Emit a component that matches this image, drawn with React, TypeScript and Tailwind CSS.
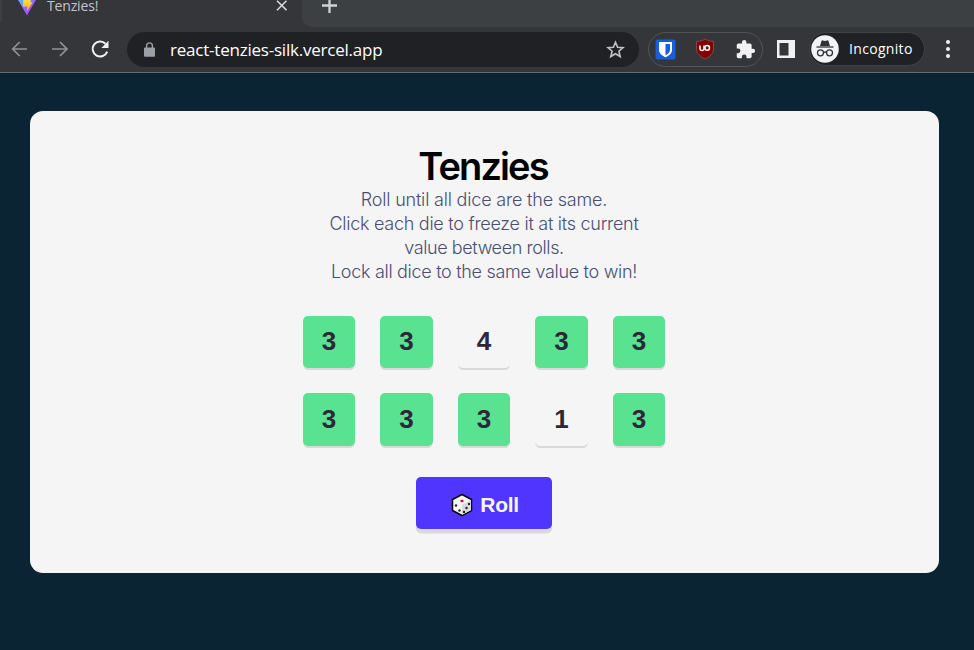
const dice = [
  { value: 3, held: true },
  { value: 3, held: true },
  { value: 4, held: false },
  { value: 3, held: true },
  { value: 3, held: true },
  { value: 3, held: true },
  { value: 3, held: true },
  { value: 3, held: true },
  { value: 1, held: false },
  { value: 3, held: true },
];

function ViteLogo() {
  return (
    <svg width="20" height="18" viewBox="0 0 20 18" className="block">
      <defs>
        <linearGradient id="vite" x1="0" y1="0" x2="1" y2="1">
          <stop offset="0" stopColor="#41d1ff" />
          <stop offset="0.65" stopColor="#a74dff" />
          <stop offset="1" stopColor="#bd34fe" />
        </linearGradient>
        <linearGradient id="bolt" x1="0" y1="0" x2="0" y2="1">
          <stop offset="0" stopColor="#ffe45c" />
          <stop offset="1" stopColor="#ffa800" />
        </linearGradient>
      </defs>
      <path d="M0 0h20L10 17.5z" fill="url(#vite)" />
      <path d="M6.500 0h8l-1.200 4.200h2.300L9.6 14l.9-5.400H5.800z" fill="url(#bolt)" />
    </svg>
  );
}

function TabStrip() {
  return (
    <header className="flex h-[27px] bg-[#35363a]">
      <div className="h-[22px] w-[2px] rounded-br-[2px] bg-[#3c4043]" />
      <div className="flex w-[300px] items-start pl-[15px]">
        <div className="-mt-[2px]">
          <ViteLogo />
        </div>
        <span className="-mt-[4px] ml-[10px] w-[228px] text-[14px] leading-[19px] tracking-[-0.150px] text-[#c3c4c6]">
          Tenzies!
        </span>
        <svg width="12" height="12" viewBox="0 0 12 12" className="block" stroke="#d6d7d9" strokeWidth="1.6">
          <path d="M2 .7l9.500 9.500M11.500 .7L2 10.200" />
        </svg>
      </div>
      <div className="flex-1 rounded-bl-[10px] bg-[#3c4043] pl-[19px]">
        <svg width="17" height="14" viewBox="0 0 17 14" className="block" stroke="#d0d1d3" strokeWidth="2.300">
          <path d="M1 5.500h15M8.500 -2v15" />
        </svg>
      </div>
    </header>
  );
}

function Toolbar() {
  return (
    <nav className="flex h-[46px] items-center border-b border-[#6a6b6e] bg-[#35363a] pb-px pl-[11px]">
      <svg width="18" height="18" viewBox="0 0 18 18" fill="none" stroke="#919295" strokeWidth="1.7">
        <path d="M16 9H2M8.700 2L1.700 9l7 7" />
      </svg>
      <svg width="18" height="18" viewBox="0 0 18 18" fill="none" stroke="#919295" strokeWidth="1.7" className="ml-[22px]">
        <path d="M1 9h14.500M9 2l7 7-7 7" />
      </svg>
      <svg width="20" height="20" viewBox="0 0 20 20" className="ml-[21px]">
        <path d="M15.500 4.700A7.500 7.500 0 1 0 17.200 12.600" fill="none" stroke="#f1f1f1" strokeWidth="2" />
        <path d="M18.500 1.800v7.100h-7.100z" fill="#f1f1f1" />
      </svg>
      <div className="mt-px ml-[17px] flex h-[35px] w-[512px] items-center rounded-full bg-[#202124] pr-[14px] pl-[17px]">
        <svg width="11" height="16" viewBox="0 0 11 16">
          <rect x="0" y="5.500" width="11" height="9.300" rx="1" fill="#9aa0a6" />
          <path d="M2.600 6V3.800a2.900 2.900 0 0 1 5.800 0V6" fill="none" stroke="#9aa0a6" strokeWidth="1.400" />
        </svg>
        <span className="ml-[15px] flex-1 text-[17px] leading-[22px] tracking-[-0.220px] whitespace-nowrap text-white">
          react-tenzies-silk.vercel.app
        </span>
        <svg width="19" height="19" viewBox="0 0 19 19" fill="none" stroke="#c2c3c5" strokeWidth="1.600" className="-mt-px">
          <path d="M9.500 2.200l2.100 5 5.400.5-4.100 3.500 1.300 5.300-4.700-2.800-4.700 2.800 1.300-5.300L2 7.700l5.400-.5z" />
        </svg>
      </div>
      <div className="mt-px ml-[9px] flex h-[35px] w-[115px] items-center rounded-full border border-[#525357] pb-px pl-[6px]">
        <svg width="21" height="21" viewBox="0 0 21 21">
          <rect x="0.500" y="0.500" width="20" height="20" rx="2" fill="#175ddc" />
          <path d="M4 3h13v8c0 3.500-3.500 6-6.500 7.300C7.500 17 4 14.500 4 11z" fill="#fff" />
          <path d="M10.500 5h4.500v6c0 2.300-2 4-4.500 5.200z" fill="#175ddc" />
        </svg>
        <svg width="20" height="22" viewBox="0 0 20 22" className="ml-[19px]">
          <path d="M10 1c2.500 1.700 5 2.400 8.500 2.400v7.600c0 4.500-4 7.800-8.500 10-4.500-2.200-8.500-5.500-8.500-10V3.400C5 3.400 7.500 2.700 10 1z" fill="#800000" stroke="#a05558" strokeWidth="0.700" />
          <path d="M5 7.500v3.100a2 2 0 0 0 4 0V7.500" fill="none" stroke="#fff" strokeWidth="1.500" />
          <circle cx="12.200" cy="9.900" r="2.300" fill="none" stroke="#fff" strokeWidth="1.500" />
        </svg>
        <svg width="21" height="21" viewBox="0 0 24 24" className="ml-[20px]" fill="#f1f1f1">
          <path d="M20.500 11H19V7c0-1.100-.9-2-2-2h-4V3.500a2.500 2.500 0 0 0-5 0V5H4c-1.100 0-2 .9-2 2v3.800h1.500a2.700 2.700 0 0 1 0 5.400H2V20c0 1.100.9 2 2 2h3.800v-1.500a2.700 2.700 0 0 1 5.400 0V22H17c1.100 0 2-.9 2-2v-4h1.500a2.500 2.500 0 0 0 0-5z" />
        </svg>
      </div>
      <svg width="18" height="18" viewBox="0 0 18 18" className="ml-[14px]">
        <path d="M0 0h18v18H0z" fill="#f1f1f1" />
        <path d="M2.500 3h9v12.500h-9z" fill="#35363a" />
      </svg>
      <div className="ml-[14px] flex h-[34px] w-[116px] items-center rounded-full border border-[#414246] bg-[#202124] pl-px">
        <svg width="28" height="28" viewBox="0 0 28 28">
          <circle cx="14" cy="14" r="13.800" fill="#f1f3f4" />
          <path d="M9 11l1.500-5c.2-.7.8-.8 1.300-.6l2.200.6 2.200-.6c.5-.2 1.100-.1 1.300.6l1.500 5z" fill="#303135" />
          <path d="M5.500 12h17" stroke="#303135" strokeWidth="1.300" />
          <g fill="none" stroke="#303135" strokeWidth="1.300">
            <circle cx="9.500" cy="17.800" r="3" />
            <circle cx="18.500" cy="17.800" r="3" />
            <path d="M12.500 17.500q1.500-1 3 0" />
          </g>
        </svg>
        <span className="ml-[10px] text-[14px] leading-[20px] tracking-[0.320px] text-white">Incognito</span>
      </div>
      <div className="ml-[21px] flex flex-col gap-[3px]">
        <i className="size-1 rounded-full bg-[#f1f1f1]" />
        <i className="size-1 rounded-full bg-[#f1f1f1]" />
        <i className="size-1 rounded-full bg-[#f1f1f1]" />
      </div>
    </nav>
  );
}

function Die({ value, held }: { value: number; held: boolean }) {
  return (
    <button
      className={`flex h-[52.500px] w-[52.500px] items-center justify-center rounded-[5px] pb-[2px] font-['Liberation_Sans',Arial,sans-serif] text-[26px] leading-none font-bold text-[#2b283a] shadow-[0_2.500px_0_-0.500px_#d9d9d9] ${
        held ? "bg-[#59e391]" : "bg-[#f5f5f5]"
      }`}
    >
      {value}
    </button>
  );
}

function DiceIcon() {
  return (
    <svg width="22" height="24" viewBox="0 0 22 24">
      <path d="M11 1.500l9.500 5v11L11 22.500l-9.500-5v-11z" fill="#f5f5f5" stroke="#080808" strokeWidth="1.500" strokeLinejoin="round" />
      <path d="M11 12l9-5v10.300l-9 4.700z" fill="#dadada" />
      <ellipse cx="11" cy="8" rx="1.700" ry="1.200" fill="#d31324" />
      <g fill="#242424">
        <circle cx="5" cy="12.500" r="1.200" />
        <circle cx="8.500" cy="17.500" r="1.200" />
        <circle cx="13" cy="19" r="1.200" />
        <circle cx="15.500" cy="15" r="1.200" />
        <circle cx="18" cy="11" r="1.200" />
      </g>
    </svg>
  );
}

export default function App() {
  return (
    <div className="h-[650px] w-[974px] overflow-hidden bg-[#0b2434] font-['Open_Sans','Noto_Sans',sans-serif]">
      <TabStrip />
      <Toolbar />
      <main className="mt-[38px] ml-[30px] flex h-[462px] w-[909px] flex-col items-center rounded-[13px] bg-[#f5f5f5] pt-[32px] pr-px font-['Inter',sans-serif]">
        <h1 className="h-[45px] pr-[2px] text-[38px] leading-[47px] font-[560] tracking-[-1.900px] text-black">Tenzies</h1>
        <div className="flex flex-col items-center text-[18px] leading-[24px] font-light whitespace-nowrap text-[#4a4e74]">
          <p className="tracking-[-0.190px]">Roll until all dice are the same.</p>
          <p className="tracking-[-0.270px]">Click each die to freeze it at its current</p>
          <p className="tracking-[-0.400px]">value between rolls.</p>
          <p className="tracking-[-0.300px]">Lock all dice to the same value to win!</p>
        </div>
        <div className="mt-[31.750px] grid grid-cols-5 gap-[25px]">
          {dice.map((die, i) => (
            <Die key={i} value={die.value} held={die.held} />
          ))}
        </div>
        <button className="mt-[31.250px] flex h-[52px] w-[136px] items-center justify-center gap-[7px] rounded-[5px] bg-[#5035ff] pt-[3px] pl-[2px] font-['Liberation_Sans',Arial,sans-serif] text-[21px] leading-none font-bold tracking-[-0.300px] text-[#f5f5f5] shadow-[0_4.500px_0_#d9d9d9]">
          <DiceIcon />
          Roll
        </button>
      </main>
    </div>
  );
}
